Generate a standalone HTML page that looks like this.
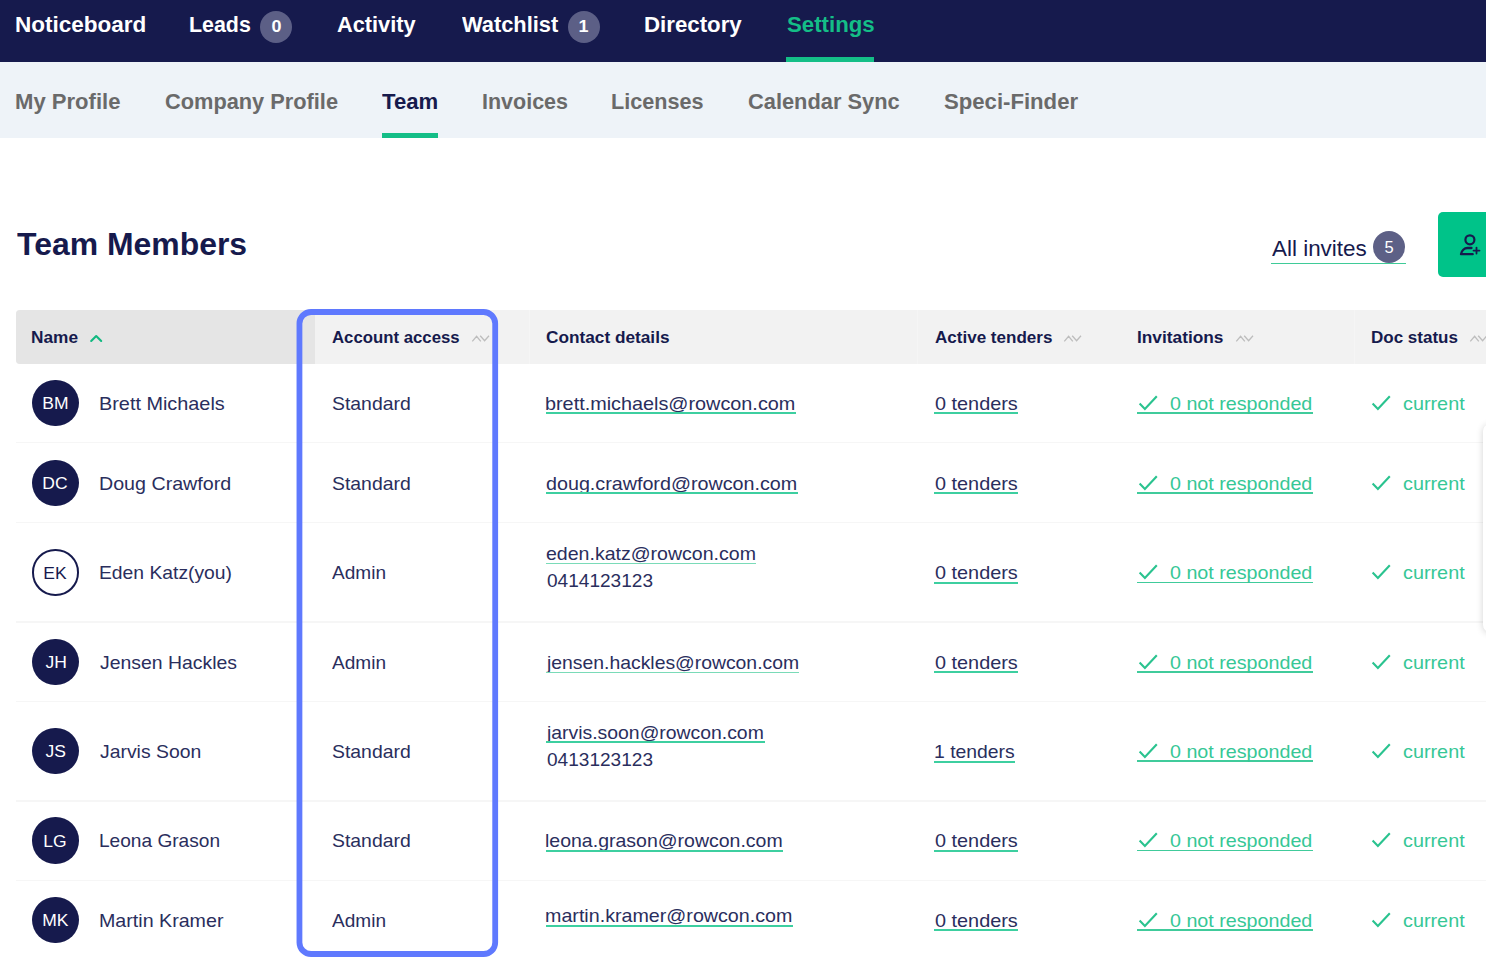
<!DOCTYPE html>
<html lang="en">
<head>
<meta charset="utf-8">
<title>Team Members</title>
<style>
html,body{margin:0;padding:0;background:#fff;}
body{width:1486px;height:972px;position:relative;overflow:hidden;font-family:"Liberation Sans",sans-serif;}
.t{position:absolute;white-space:pre;line-height:normal;}
.abs{position:absolute;}
.badge{position:absolute;width:32px;height:32px;border-radius:50%;background:#5c5f86;color:#fff;text-align:center;}
.sep{position:absolute;left:16px;width:1470px;height:1.3px;background:#f6f6f6;}
</style>
</head>
<body>
<!-- top navigation -->
<div class="abs" style="left:0;top:50px;width:1486px;height:88px;background:#eef3f8"></div>
<div class="abs" style="left:0;top:0;width:1486px;height:61.6px;background:#161a4d"></div>
<div class="abs" style="left:785.9px;top:56.6px;width:88.2px;height:5px;background:#14be87"></div>
<div class="abs" style="left:382px;top:132.5px;width:56px;height:5.5px;background:#14be87"></div>
<div class="badge" style="left:260.2px;top:10.6px;font-size:16px;font-weight:700;line-height:31px"><span style="display:inline-block;transform:scaleX(1.12)">0</span></div>
<div class="badge" style="left:567.6px;top:10.6px;font-size:16px;font-weight:700;line-height:31px"><span style="display:inline-block;transform:scaleX(1.12)">1</span></div>
<!-- all invites -->
<div class="abs" style="left:1271px;top:262.5px;width:134.5px;height:1.6px;background:#3fcb98"></div>
<div class="badge" style="left:1373.2px;top:231.3px;font-size:16.5px;line-height:33.5px;background:#5d6086">5</div>
<div class="abs" style="left:1438.3px;top:212.4px;width:60px;height:64.5px;border-radius:5px;background:#00c389"></div>
<svg class="abs" style="left:1456px;top:230px" width="30" height="32" viewBox="0 0 30 32">
 <g fill="none" stroke="#161a4d" stroke-linecap="round" stroke-linejoin="round">
  <circle cx="13.9" cy="9.8" r="4.5" stroke-width="2.2"/>
  <path d="M15.5 18 L11.4 18 C8.4 18 5.5 20.6 5 24.2 L16.7 24.2" stroke-width="2.3"/>
  <path d="M20.5 17.6 V23.6 M17.5 20.6 H23.5" stroke-width="1.8"/>
 </g>
</svg>
<!-- table header -->
<div class="abs" style="left:16px;top:309.6px;width:1480px;height:54px;border-radius:4px;background:#f2f2f2"></div>
<div class="abs" style="left:16px;top:309.6px;width:299px;height:54px;border-radius:4px 0 0 4px;background:#e5e5e5"></div>
<div class="abs" style="left:529.2px;top:309.6px;width:1.2px;height:54px;background:#f5f5f5"></div>
<div class="abs" style="left:916.6px;top:309.6px;width:1.2px;height:54px;background:#f5f5f5"></div>
<div class="abs" style="left:1354.2px;top:309.6px;width:1.2px;height:54px;background:#f5f5f5"></div>
<!-- row separators -->
<div class="sep" style="top:442.2px"></div>
<div class="sep" style="top:522.2px"></div>
<div class="sep" style="top:621.4px"></div>
<div class="sep" style="top:701.2px"></div>
<div class="sep" style="top:800.4px"></div>
<div class="sep" style="top:879.8px"></div>
<!-- sort icons -->
<svg class="abs" style="left:88px;top:332.2px" width="16" height="12" viewBox="0 0 16 12"><path d="M3.2 9 L8.2 4 L13.2 9" fill="none" stroke="#12b981" stroke-width="2.1" stroke-linecap="round" stroke-linejoin="round"/></svg>
<svg class="abs" style="left:470.8px;top:333.4px" width="20" height="11" viewBox="0 0 20 11"><path d="M1.3 8.3 L5.6 3.3 L9.8 8.3 M9.2 2.7 L13.6 7.7 L18 2.7" fill="none" stroke="#bdbdbd" stroke-width="1.3"/></svg>
<svg class="abs" style="left:1063px;top:333.4px" width="20" height="11" viewBox="0 0 20 11"><path d="M1.3 8.3 L5.6 3.3 L9.8 8.3 M9.2 2.7 L13.6 7.7 L18 2.7" fill="none" stroke="#bdbdbd" stroke-width="1.3"/></svg>
<svg class="abs" style="left:1234.5px;top:333.4px" width="20" height="11" viewBox="0 0 20 11"><path d="M1.3 8.3 L5.6 3.3 L9.8 8.3 M9.2 2.7 L13.6 7.7 L18 2.7" fill="none" stroke="#bdbdbd" stroke-width="1.3"/></svg>
<svg class="abs" style="left:1469px;top:333.4px" width="20" height="11" viewBox="0 0 20 11"><path d="M1.3 8.3 L5.6 3.3 L9.8 8.3 M9.2 2.7 L13.6 7.7 L18 2.7" fill="none" stroke="#bdbdbd" stroke-width="1.3"/></svg>
<div style="position:absolute;left:32.2px;top:379.8px;width:46.4px;height:46.4px;border-radius:50%;background:#161a4d"></div>
<div style="position:absolute;left:1136.7px;top:412.1px;width:176.2px;height:1.6px;background:#40cb9b"></div>
<svg style="position:absolute;left:1136.5px;top:392.6px" width="24" height="20" viewBox="0 0 24 20"><path d="M2.6 10.6 L7.9 16 L19.8 3.2" fill="none" stroke="#2ac38f" stroke-width="2.1"/></svg>
<svg style="position:absolute;left:1369.5px;top:392.6px" width="24" height="20" viewBox="0 0 24 20"><path d="M2.6 10.6 L7.9 16 L19.8 3.2" fill="none" stroke="#2ac38f" stroke-width="2.1"/></svg>
<div style="position:absolute;left:32.2px;top:460.0px;width:46.4px;height:46.4px;border-radius:50%;background:#161a4d"></div>
<div style="position:absolute;left:1136.7px;top:492.3px;width:176.2px;height:1.6px;background:#40cb9b"></div>
<svg style="position:absolute;left:1136.5px;top:472.8px" width="24" height="20" viewBox="0 0 24 20"><path d="M2.6 10.6 L7.9 16 L19.8 3.2" fill="none" stroke="#2ac38f" stroke-width="2.1"/></svg>
<svg style="position:absolute;left:1369.5px;top:472.8px" width="24" height="20" viewBox="0 0 24 20"><path d="M2.6 10.6 L7.9 16 L19.8 3.2" fill="none" stroke="#2ac38f" stroke-width="2.1"/></svg>
<div style="position:absolute;left:32.2px;top:549.3px;width:46.4px;height:46.4px;border-radius:50%;border:2.2px solid #161a4d;box-sizing:border-box"></div>
<div style="position:absolute;left:1136.7px;top:581.6px;width:176.2px;height:1.6px;background:#40cb9b"></div>
<svg style="position:absolute;left:1136.5px;top:562.1px" width="24" height="20" viewBox="0 0 24 20"><path d="M2.6 10.6 L7.9 16 L19.8 3.2" fill="none" stroke="#2ac38f" stroke-width="2.1"/></svg>
<svg style="position:absolute;left:1369.5px;top:562.1px" width="24" height="20" viewBox="0 0 24 20"><path d="M2.6 10.6 L7.9 16 L19.8 3.2" fill="none" stroke="#2ac38f" stroke-width="2.1"/></svg>
<div style="position:absolute;left:32.2px;top:638.8px;width:46.4px;height:46.4px;border-radius:50%;background:#161a4d"></div>
<div style="position:absolute;left:1136.7px;top:671.1px;width:176.2px;height:1.6px;background:#40cb9b"></div>
<svg style="position:absolute;left:1136.5px;top:651.6px" width="24" height="20" viewBox="0 0 24 20"><path d="M2.6 10.6 L7.9 16 L19.8 3.2" fill="none" stroke="#2ac38f" stroke-width="2.1"/></svg>
<svg style="position:absolute;left:1369.5px;top:651.6px" width="24" height="20" viewBox="0 0 24 20"><path d="M2.6 10.6 L7.9 16 L19.8 3.2" fill="none" stroke="#2ac38f" stroke-width="2.1"/></svg>
<div style="position:absolute;left:32.2px;top:728.1px;width:46.4px;height:46.4px;border-radius:50%;background:#161a4d"></div>
<div style="position:absolute;left:1136.7px;top:760.4px;width:176.2px;height:1.6px;background:#40cb9b"></div>
<svg style="position:absolute;left:1136.5px;top:740.9px" width="24" height="20" viewBox="0 0 24 20"><path d="M2.6 10.6 L7.9 16 L19.8 3.2" fill="none" stroke="#2ac38f" stroke-width="2.1"/></svg>
<svg style="position:absolute;left:1369.5px;top:740.9px" width="24" height="20" viewBox="0 0 24 20"><path d="M2.6 10.6 L7.9 16 L19.8 3.2" fill="none" stroke="#2ac38f" stroke-width="2.1"/></svg>
<div style="position:absolute;left:32.2px;top:817.3px;width:46.4px;height:46.4px;border-radius:50%;background:#161a4d"></div>
<div style="position:absolute;left:1136.7px;top:849.6px;width:176.2px;height:1.6px;background:#40cb9b"></div>
<svg style="position:absolute;left:1136.5px;top:830.1px" width="24" height="20" viewBox="0 0 24 20"><path d="M2.6 10.6 L7.9 16 L19.8 3.2" fill="none" stroke="#2ac38f" stroke-width="2.1"/></svg>
<svg style="position:absolute;left:1369.5px;top:830.1px" width="24" height="20" viewBox="0 0 24 20"><path d="M2.6 10.6 L7.9 16 L19.8 3.2" fill="none" stroke="#2ac38f" stroke-width="2.1"/></svg>
<div style="position:absolute;left:32.2px;top:896.8px;width:46.4px;height:46.4px;border-radius:50%;background:#161a4d"></div>
<div style="position:absolute;left:1136.7px;top:929.1px;width:176.2px;height:1.6px;background:#40cb9b"></div>
<svg style="position:absolute;left:1136.5px;top:909.6px" width="24" height="20" viewBox="0 0 24 20"><path d="M2.6 10.6 L7.9 16 L19.8 3.2" fill="none" stroke="#2ac38f" stroke-width="2.1"/></svg>
<svg style="position:absolute;left:1369.5px;top:909.6px" width="24" height="20" viewBox="0 0 24 20"><path d="M2.6 10.6 L7.9 16 L19.8 3.2" fill="none" stroke="#2ac38f" stroke-width="2.1"/></svg>
<span class="t" style="left:15.18px;top:12.0px;font-size:22px;font-weight:700;color:#fff;transform:scaleX(1.0230);transform-origin:0 0">Noticeboard</span>
<span class="t" style="left:188.83px;top:12.0px;font-size:22px;font-weight:700;color:#fff;transform:scaleX(0.9720);transform-origin:0 0">Leads</span>
<span class="t" style="left:337.40px;top:12.0px;font-size:22px;font-weight:700;color:#fff;transform:scaleX(0.9883);transform-origin:0 0">Activity</span>
<span class="t" style="left:461.50px;top:12.0px;font-size:22px;font-weight:700;color:#fff;transform:scaleX(0.9924);transform-origin:0 0">Watchlist</span>
<span class="t" style="left:643.79px;top:12.0px;font-size:22px;font-weight:700;color:#fff;transform:scaleX(1.0118);transform-origin:0 0">Directory</span>
<span class="t" style="left:786.80px;top:12.0px;font-size:22px;font-weight:700;color:#14be87;transform:scaleX(1.0098);transform-origin:0 0">Settings</span>
<span class="t" style="left:15.10px;top:89.0px;font-size:22px;font-weight:700;color:#6a6a6a;transform:scaleX(1.0029);transform-origin:0 0">My Profile</span>
<span class="t" style="left:164.70px;top:89.0px;font-size:22px;font-weight:700;color:#6a6a6a;transform:scaleX(0.9898);transform-origin:0 0">Company Profile</span>
<span class="t" style="left:382.40px;top:89.0px;font-size:22px;font-weight:700;color:#161a4d;transform:scaleX(1.0059);transform-origin:0 0">Team</span>
<span class="t" style="left:481.52px;top:89.0px;font-size:22px;font-weight:700;color:#6a6a6a;transform:scaleX(0.9769);transform-origin:0 0">Invoices</span>
<span class="t" style="left:611.32px;top:89.0px;font-size:22px;font-weight:700;color:#6a6a6a;transform:scaleX(0.9825);transform-origin:0 0">Licenses</span>
<span class="t" style="left:748.40px;top:89.0px;font-size:22px;font-weight:700;color:#6a6a6a;transform:scaleX(0.9921);transform-origin:0 0">Calendar Sync</span>
<span class="t" style="left:944.20px;top:89.0px;font-size:22px;font-weight:700;color:#6a6a6a;transform:scaleX(1.0061);transform-origin:0 0">Speci-Finder</span>
<span class="t" style="left:16.60px;top:225.9px;font-size:32px;font-weight:700;color:#161a4d;transform:scaleX(0.9978);transform-origin:0 0">Team Members</span>
<span class="t" style="left:1271.50px;top:235.5px;font-size:22px;font-weight:400;color:#161a4d;transform:scaleX(1.0192);transform-origin:0 0">All invites</span>
<span class="t" style="left:30.92px;top:328.7px;font-size:16px;font-weight:700;color:#161a4d;transform:scaleX(1.0778);transform-origin:0 0">Name</span>
<span class="t" style="left:332.30px;top:328.7px;font-size:16px;font-weight:700;color:#161a4d;transform:scaleX(1.0473);transform-origin:0 0">Account access</span>
<span class="t" style="left:546.40px;top:328.7px;font-size:16px;font-weight:700;color:#161a4d;transform:scaleX(1.0768);transform-origin:0 0">Contact details</span>
<span class="t" style="left:934.70px;top:328.7px;font-size:16px;font-weight:700;color:#161a4d;transform:scaleX(1.0646);transform-origin:0 0">Active tenders</span>
<span class="t" style="left:1136.72px;top:328.7px;font-size:16px;font-weight:700;color:#161a4d;transform:scaleX(1.0808);transform-origin:0 0">Invitations</span>
<span class="t" style="left:1370.54px;top:328.7px;font-size:16px;font-weight:700;color:#161a4d;transform:scaleX(1.0631);transform-origin:0 0">Doc status</span>
<span class="t" style="left:42.9px;top:394.1px;font-size:16.5px;font-weight:400;color:#fff;transform:scaleX(1.06);transform-origin:12.5px 0">BM</span>
<span class="t" style="left:98.93px;top:392.9px;font-size:18.5px;font-weight:400;color:#2a2e5d;transform:scaleX(1.0728);transform-origin:0 0">Brett Michaels</span>
<span class="t" style="left:332.40px;top:392.9px;font-size:18.5px;font-weight:400;color:#2a2e5d;transform:scaleX(1.0482);transform-origin:0 0">Standard</span>
<span class="t" style="left:545.23px;top:392.9px;font-size:18.5px;font-weight:400;color:#2a2e5d;transform:scaleX(1.0713);transform-origin:0 0">brett.michaels@rowcon.com</span>
<div style="position:absolute;left:545.8px;top:412.2px;width:250.2px;height:2px;background:#3dcfa0"></div>
<span class="t" style="left:934.60px;top:392.9px;font-size:18.5px;font-weight:400;color:#2a2e5d;transform:scaleX(1.0730);transform-origin:0 0">0 tenders</span>
<div style="position:absolute;left:934.1px;top:412.2px;width:83.9px;height:2px;background:#3dcfa0"></div>
<span class="t" style="left:1170.00px;top:392.9px;font-size:18.5px;font-weight:400;color:#36c796;transform:scaleX(1.0642);transform-origin:0 0">0 not responded</span>
<span class="t" style="left:1402.80px;top:392.9px;font-size:18.5px;font-weight:400;color:#36c796;transform:scaleX(1.0707);transform-origin:0 0">current</span>
<span class="t" style="left:42.9px;top:474.3px;font-size:16.5px;font-weight:400;color:#fff;transform:scaleX(1.06);transform-origin:12.5px 0">DC</span>
<span class="t" style="left:98.94px;top:473.1px;font-size:18.5px;font-weight:400;color:#2a2e5d;transform:scaleX(1.0623);transform-origin:0 0">Doug Crawford</span>
<span class="t" style="left:332.40px;top:473.1px;font-size:18.5px;font-weight:400;color:#2a2e5d;transform:scaleX(1.0482);transform-origin:0 0">Standard</span>
<span class="t" style="left:546.30px;top:473.1px;font-size:18.5px;font-weight:400;color:#2a2e5d;transform:scaleX(1.0653);transform-origin:0 0">doug.crawford@rowcon.com</span>
<div style="position:absolute;left:545.8px;top:492.4px;width:252.1px;height:2px;background:#3dcfa0"></div>
<span class="t" style="left:934.60px;top:473.1px;font-size:18.5px;font-weight:400;color:#2a2e5d;transform:scaleX(1.0730);transform-origin:0 0">0 tenders</span>
<div style="position:absolute;left:934.1px;top:492.4px;width:83.9px;height:2px;background:#3dcfa0"></div>
<span class="t" style="left:1170.00px;top:473.1px;font-size:18.5px;font-weight:400;color:#36c796;transform:scaleX(1.0642);transform-origin:0 0">0 not responded</span>
<span class="t" style="left:1402.80px;top:473.1px;font-size:18.5px;font-weight:400;color:#36c796;transform:scaleX(1.0707);transform-origin:0 0">current</span>
<span class="t" style="left:43.9px;top:563.6px;font-size:16.5px;font-weight:400;color:#161a4d;transform:scaleX(1.06);transform-origin:11.5px 0">EK</span>
<span class="t" style="left:98.96px;top:562.4px;font-size:18.5px;font-weight:400;color:#2a2e5d;transform:scaleX(1.0431);transform-origin:0 0">Eden Katz(you)</span>
<span class="t" style="left:332.40px;top:562.4px;font-size:18.5px;font-weight:400;color:#2a2e5d;transform:scaleX(1.0297);transform-origin:0 0">Admin</span>
<span class="t" style="left:546.30px;top:543.1px;font-size:18.5px;font-weight:400;color:#2a2e5d;transform:scaleX(1.0564);transform-origin:0 0">eden.katz@rowcon.com</span>
<div style="position:absolute;left:545.8px;top:563.0px;width:210.5px;height:1.1px;background:#7adbb8"></div>
<span class="t" style="left:546.50px;top:570.0px;font-size:18.5px;font-weight:400;color:#2a2e5d;transform:scaleX(1.0302);transform-origin:0 0">0414123123</span>
<span class="t" style="left:934.60px;top:562.4px;font-size:18.5px;font-weight:400;color:#2a2e5d;transform:scaleX(1.0730);transform-origin:0 0">0 tenders</span>
<div style="position:absolute;left:934.1px;top:581.7px;width:83.9px;height:2px;background:#3dcfa0"></div>
<span class="t" style="left:1170.00px;top:562.4px;font-size:18.5px;font-weight:400;color:#36c796;transform:scaleX(1.0642);transform-origin:0 0">0 not responded</span>
<span class="t" style="left:1402.80px;top:562.4px;font-size:18.5px;font-weight:400;color:#36c796;transform:scaleX(1.0707);transform-origin:0 0">current</span>
<span class="t" style="left:45.8px;top:653.1px;font-size:16.5px;font-weight:400;color:#fff;transform:scaleX(1.06);transform-origin:9.6px 0">JH</span>
<span class="t" style="left:100.00px;top:651.9px;font-size:18.5px;font-weight:400;color:#2a2e5d;transform:scaleX(1.0488);transform-origin:0 0">Jensen Hackles</span>
<span class="t" style="left:332.40px;top:651.9px;font-size:18.5px;font-weight:400;color:#2a2e5d;transform:scaleX(1.0297);transform-origin:0 0">Admin</span>
<span class="t" style="left:547.35px;top:651.9px;font-size:18.5px;font-weight:400;color:#2a2e5d;transform:scaleX(1.0465);transform-origin:0 0">jensen.hackles@rowcon.com</span>
<div style="position:absolute;left:545.8px;top:671.8px;width:253.7px;height:1.1px;background:#7adbb8"></div>
<span class="t" style="left:934.60px;top:651.9px;font-size:18.5px;font-weight:400;color:#2a2e5d;transform:scaleX(1.0730);transform-origin:0 0">0 tenders</span>
<div style="position:absolute;left:934.1px;top:671.2px;width:83.9px;height:2px;background:#3dcfa0"></div>
<span class="t" style="left:1170.00px;top:651.9px;font-size:18.5px;font-weight:400;color:#36c796;transform:scaleX(1.0642);transform-origin:0 0">0 not responded</span>
<span class="t" style="left:1402.80px;top:651.9px;font-size:18.5px;font-weight:400;color:#36c796;transform:scaleX(1.0707);transform-origin:0 0">current</span>
<span class="t" style="left:45.8px;top:742.4px;font-size:16.5px;font-weight:400;color:#fff;transform:scaleX(1.06);transform-origin:9.6px 0">JS</span>
<span class="t" style="left:100.00px;top:741.2px;font-size:18.5px;font-weight:400;color:#2a2e5d;transform:scaleX(1.0470);transform-origin:0 0">Jarvis Soon</span>
<span class="t" style="left:332.40px;top:741.2px;font-size:18.5px;font-weight:400;color:#2a2e5d;transform:scaleX(1.0482);transform-origin:0 0">Standard</span>
<span class="t" style="left:547.35px;top:721.9px;font-size:18.5px;font-weight:400;color:#2a2e5d;transform:scaleX(1.0476);transform-origin:0 0">jarvis.soon@rowcon.com</span>
<div style="position:absolute;left:545.8px;top:741.2px;width:218.8px;height:2px;background:#3dcfa0"></div>
<span class="t" style="left:546.50px;top:748.8px;font-size:18.5px;font-weight:400;color:#2a2e5d;transform:scaleX(1.0302);transform-origin:0 0">0413123123</span>
<span class="t" style="left:933.55px;top:741.2px;font-size:18.5px;font-weight:400;color:#2a2e5d;transform:scaleX(1.0463);transform-origin:0 0">1 tenders</span>
<div style="position:absolute;left:934.1px;top:760.5px;width:80.8px;height:2px;background:#3dcfa0"></div>
<span class="t" style="left:1170.00px;top:741.2px;font-size:18.5px;font-weight:400;color:#36c796;transform:scaleX(1.0642);transform-origin:0 0">0 not responded</span>
<span class="t" style="left:1402.80px;top:741.2px;font-size:18.5px;font-weight:400;color:#36c796;transform:scaleX(1.0707);transform-origin:0 0">current</span>
<span class="t" style="left:44.3px;top:831.6px;font-size:16.5px;font-weight:400;color:#fff;transform:scaleX(1.06);transform-origin:11.1px 0">LG</span>
<span class="t" style="left:98.97px;top:830.4px;font-size:18.5px;font-weight:400;color:#2a2e5d;transform:scaleX(1.0322);transform-origin:0 0">Leona Grason</span>
<span class="t" style="left:332.40px;top:830.4px;font-size:18.5px;font-weight:400;color:#2a2e5d;transform:scaleX(1.0482);transform-origin:0 0">Standard</span>
<span class="t" style="left:545.25px;top:830.4px;font-size:18.5px;font-weight:400;color:#2a2e5d;transform:scaleX(1.0541);transform-origin:0 0">leona.grason@rowcon.com</span>
<div style="position:absolute;left:545.8px;top:849.7px;width:237.6px;height:2px;background:#3dcfa0"></div>
<span class="t" style="left:934.60px;top:830.4px;font-size:18.5px;font-weight:400;color:#2a2e5d;transform:scaleX(1.0730);transform-origin:0 0">0 tenders</span>
<div style="position:absolute;left:934.1px;top:849.7px;width:83.9px;height:2px;background:#3dcfa0"></div>
<span class="t" style="left:1170.00px;top:830.4px;font-size:18.5px;font-weight:400;color:#36c796;transform:scaleX(1.0642);transform-origin:0 0">0 not responded</span>
<span class="t" style="left:1402.80px;top:830.4px;font-size:18.5px;font-weight:400;color:#36c796;transform:scaleX(1.0707);transform-origin:0 0">current</span>
<span class="t" style="left:42.5px;top:911.1px;font-size:16.5px;font-weight:400;color:#fff;transform:scaleX(1.06);transform-origin:12.9px 0">MK</span>
<span class="t" style="left:98.94px;top:909.9px;font-size:18.5px;font-weight:400;color:#2a2e5d;transform:scaleX(1.0618);transform-origin:0 0">Martin Kramer</span>
<span class="t" style="left:332.40px;top:909.9px;font-size:18.5px;font-weight:400;color:#2a2e5d;transform:scaleX(1.0297);transform-origin:0 0">Admin</span>
<span class="t" style="left:545.24px;top:905.3px;font-size:18.5px;font-weight:400;color:#2a2e5d;transform:scaleX(1.0636);transform-origin:0 0">martin.kramer@rowcon.com</span>
<div style="position:absolute;left:545.8px;top:924.6px;width:247.3px;height:2px;background:#3dcfa0"></div>
<span class="t" style="left:934.60px;top:909.9px;font-size:18.5px;font-weight:400;color:#2a2e5d;transform:scaleX(1.0730);transform-origin:0 0">0 tenders</span>
<div style="position:absolute;left:934.1px;top:929.2px;width:83.9px;height:2px;background:#3dcfa0"></div>
<span class="t" style="left:1170.00px;top:909.9px;font-size:18.5px;font-weight:400;color:#36c796;transform:scaleX(1.0642);transform-origin:0 0">0 not responded</span>
<span class="t" style="left:1402.80px;top:909.9px;font-size:18.5px;font-weight:400;color:#36c796;transform:scaleX(1.0707);transform-origin:0 0">current</span>
<!-- highlight box -->
<svg class="abs" style="left:290px;top:300px" width="220" height="670" viewBox="290 300 220 670"><rect x="299.45" y="312" width="195.75" height="642" rx="11.6" ry="11.6" fill="none" stroke="#5f79fe" stroke-width="5.8"/></svg>
<!-- floating panel edge -->
<div class="abs" style="left:1482.5px;top:423.5px;width:20px;height:208px;background:#fff;border-radius:7px;box-shadow:0 1px 7px rgba(0,0,0,.18)"></div>
</body>
</html>
